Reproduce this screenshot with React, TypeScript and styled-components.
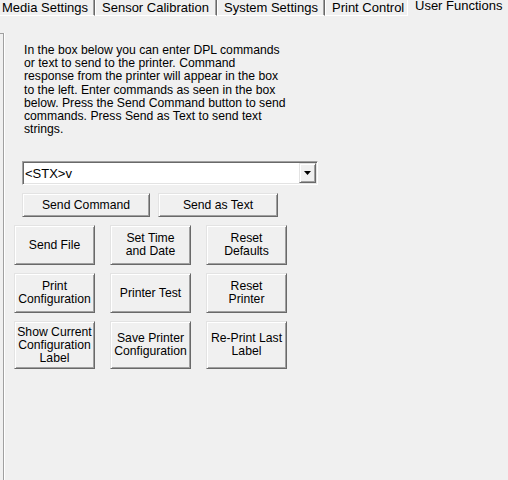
import React from 'react';
import styled, {createGlobalStyle} from "styled-components";

const GlobalStyle = createGlobalStyle`
    body {
        margin: 0;
        background: #f0f0f0;
        font-family: "Liberation Sans", Arial, sans-serif;
        font-size: 12.2px;
        color: #000;
    }
`

const tabs = [
   {title: "Media Settings", width: 100},
   {title: "Sensor Calibration", width: 122},
   {title: "System Settings", width: 108},
   {title: "Print Control", width: 84},
   {title: "User Functions", width: 110, active: true},
];

const actions = [
   "Send File",
   "Set Time\nand Date",
   "Reset\nDefaults",
   "Print\nConfiguration",
   "Printer Test",
   "Reset\nPrinter",
   "Show Current\nConfiguration\nLabel",
   "Save Printer\nConfiguration",
   "Re-Print Last\nLabel",
];

const Lines = ({text}: { text: string }) => (
   <>
      {text.split("\n").map((line, i) => (
         <React.Fragment key={i}>
            {i > 0 && <br/>}
            {line}
         </React.Fragment>
      ))}
   </>
);

export default function App() {
   return (
      <Window>
         <GlobalStyle/>
         <TabStrip>
            {tabs.map(tab => (
               <Tab key={tab.title} $width={tab.width} $active={!!tab.active}>{tab.title}</Tab>
            ))}
         </TabStrip>

         <Panel>
            <ResponseBox/>
            <Content>
               <Hint>
                  In the box below you can enter DPL commands<br/>
                  or text to send to the printer. Command<br/>
                  response from the printer will appear in the box<br/>
                  to the left. Enter commands as seen in the box<br/>
                  below. Press the Send Command button to send<br/>
                  commands. Press Send as Text to send text<br/>
                  strings.
               </Hint>

               <Combo>
                  <ComboValue>&lt;STX&gt;v</ComboValue>
                  <DropButton>
                     <svg width="7" height="4" viewBox="0 0 7 4">
                        <path d="M0 0H7L3.5 4Z" fill="#000"/>
                     </svg>
                  </DropButton>
               </Combo>

               <SendRow>
                  <Button $width={128}>Send Command</Button>
                  <Button $width={120}>Send as Text</Button>
               </SendRow>

               <ActionGrid>
                  {actions.map(label => (
                     <Button key={label}><Lines text={label}/></Button>
                  ))}
               </ActionGrid>
            </Content>
         </Panel>
      </Window>
   );
}

const Window = styled.div`
    width: 508px;
    height: 480px;
    overflow: hidden;
    background: #f0f0f0;
    display: flex;
    flex-direction: column;
`

const TabStrip = styled.div`
    display: flex;
    height: 16px;
    margin-left: -5px;
    flex-shrink: 0;
`

const Tab = styled.div<{ $width: number; $active: boolean }>`
    flex: 0 0 ${p => p.$width}px;
    box-sizing: border-box;
    padding-left: ${p => p.$active ? 7 : 6}px;
    white-space: nowrap;
    font-size: 13px;
    line-height: 15px;
    background: #f0f0f0;
    border-left: 1px solid #fff;
    border-right: 1px solid #696969;
    box-shadow: inset -1px 0 #a0a0a0;
    border-bottom: ${p => p.$active ? "none" : "1px solid #fff"};
    height: ${p => p.$active ? 18 : 16}px;
    margin-top: ${p => p.$active ? -2 : 0}px;
    margin-left: ${p => p.$active ? -2 : 0}px;
    position: relative;
    z-index: ${p => p.$active ? 1 : 0};
`

const Panel = styled.div`
    flex: 1;
    display: flex;
`

const ResponseBox = styled.div`
    width: 3px;
    margin-top: 17px;
    border-top: 1px solid #a0a0a0;
    border-right: 1px solid #a0a0a0;
    box-shadow: 1px 0 0 #fff;
`

const Content = styled.div`
    margin-left: 10px;
    display: flex;
    flex-direction: column;
    align-items: flex-start;
`

const Hint = styled.p`
    margin: 28px 0 0 10px;
    height: 92px;
    line-height: 13.2px;
    white-space: nowrap;
`

const Combo = styled.div`
    margin: 25px 0 0 8px;
    width: 296px;
    height: 24px;
    box-sizing: border-box;
    display: flex;
    align-items: center;
    background: #fff;
    border: 1px solid;
    border-color: #a0a0a0 #fff #fff #a0a0a0;
    box-shadow: inset 1px 1px #696969, inset -1px -1px #e3e3e3;
`

const ComboValue = styled.span`
    flex: 1;
    padding-left: 2px;
    font-size: 13px;
    line-height: 13px;
`

const DropButton = styled.div`
    width: 17px;
    height: 20px;
    margin-right: 1px;
    box-sizing: border-box;
    display: flex;
    align-items: center;
    justify-content: center;
    background: #f0f0f0;
    border: 1px solid;
    border-color: #e3e3e3 #696969 #696969 #e3e3e3;
    box-shadow: inset 1px 1px #fff, inset -1px -1px #a0a0a0;
`

const SendRow = styled.div`
    display: flex;
    gap: 8px;
    margin: 8px 0 0 8px;
`

const Button = styled.button<{ $width?: number }>`
    width: ${p => p.$width ? `${p.$width}px` : "auto"};
    height: ${p => p.$width ? "24px" : "auto"};
    box-sizing: border-box;
    padding: 0;
    font: inherit;
    line-height: 13px;
    white-space: nowrap;
    color: #000;
    text-align: center;
    background: #f0f0f0;
    border: 1px solid;
    border-color: #e3e3e3 #696969 #696969 #e3e3e3;
    box-shadow: inset 1px 1px #fff, inset -1px -1px #a0a0a0;
`

const ActionGrid = styled.div`
    display: grid;
    grid-template-columns: repeat(3, 81px);
    grid-template-rows: 40px 40px 48px;
    column-gap: 15px;
    row-gap: 8px;
    margin-top: 8px;
`
